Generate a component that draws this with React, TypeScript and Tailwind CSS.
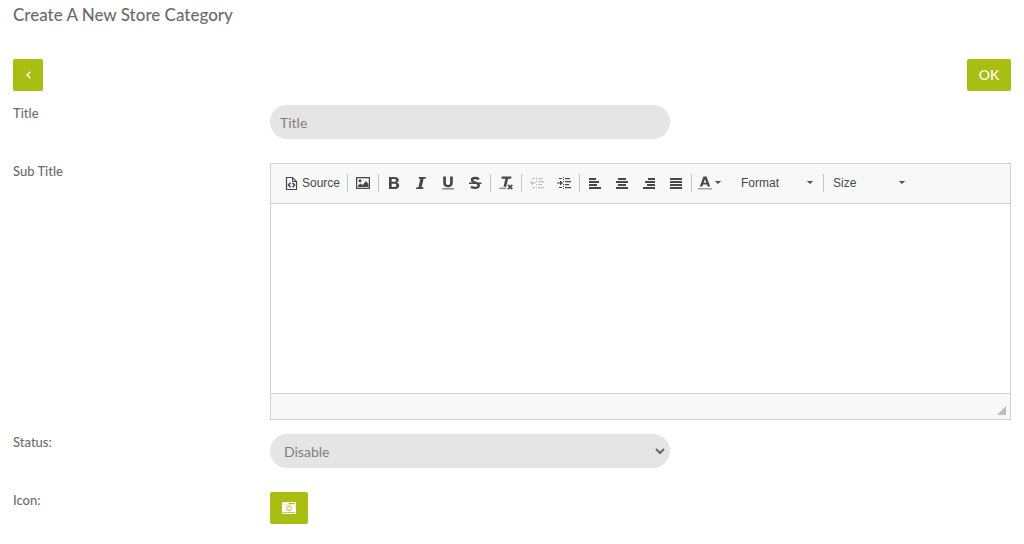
import React from 'react';

interface ToolButtonProps {
  label: string;
  disabled?: boolean;
  children: React.ReactNode;
}

const ToolButton: React.FC<ToolButtonProps> = ({ label, disabled, children }) => (
  <button
    type="button"
    title={label}
    aria-label={label}
    disabled={disabled}
    className="flex h-7 w-[27px] items-center justify-center text-[#484848] hover:bg-gray-200 disabled:opacity-30"
  >
    <svg className="h-4 w-4" viewBox="0 0 16 16" fill="currentColor" aria-hidden="true">
      {children}
    </svg>
  </button>
);

const Separator = () => <span className="ml-0.5 mr-px h-[18px] w-px bg-[#c4c4c4]" />;

const Caret = () => (
  <svg className="h-[3px] w-[6px]" viewBox="0 0 6 3" fill="#484848" aria-hidden="true">
    <path d="M0 0h6L3 3z" />
  </svg>
);

interface ComboProps {
  label: string;
}

const Combo: React.FC<ComboProps> = ({ label }) => (
  <button type="button" className="flex h-7 w-[88px] items-center justify-between px-2 text-[#484848] hover:bg-gray-200">
    {label}
    <Caret />
  </button>
);

const EditorToolbar = () => (
  <div
    role="toolbar"
    aria-label="Editor toolbar"
    className="flex h-10 flex-wrap items-center overflow-hidden border-b border-[#d1d1d1] bg-[#f8f8f8] px-3 pb-0.5 font-['Liberation_Sans',sans-serif] text-xs"
  >
    <button type="button" className="flex h-7 items-center gap-[3px] pr-[5px] text-[#484848] hover:bg-gray-200">
      <svg className="h-4 w-4" viewBox="0 0 16 16" fill="none" stroke="currentColor" aria-hidden="true">
        <path d="M3.500 14.500v-12h6l4 4v8z" strokeWidth="1.200" />
        <path d="M9.500 2.500v4h4" strokeWidth="1" />
        <path d="M7.500 7.800L5.500 10l2 2.200M9.500 7.800l2 2.200-2 2.200" strokeWidth="1.600" />
      </svg>
      <span>Source</span>
    </button>
    <Separator />
    <ToolButton label="Image">
      <path fillRule="evenodd" d="M1 2h14v12H1zM2.200 3.200v9.600h11.600V3.200z" />
      <circle cx="5" cy="5.800" r="1.500" />
      <path d="M3 12V10.500l2.500-2 2 1.500 3.500-4 2.500 3V12z" />
    </ToolButton>
    <Separator />
    <ToolButton label="Bold">
      <path
        fillRule="evenodd"
        d="M3 2h5.700c2.600 0 4 1.100 4 3.100 0 1.400-.7 2.200-2 2.600 1.600.3 2.500 1.400 2.500 2.900 0 2.200-1.600 3.400-4.300 3.400H3zM5.700 4v2.800h2.500c1.100 0 1.800-.5 1.800-1.400S9.400 4 8.300 4zM5.700 8.700V12h2.700c1.300 0 2-.6 2-1.700s-.7-1.600-2-1.600z"
      />
    </ToolButton>
    <ToolButton label="Italic">
      <path d="M6 2h7l-.4 1.800h-2l-2 8.400h2l-.4 1.800H3l.4-1.800h2l2-8.400h-1.800z" />
    </ToolButton>
    <ToolButton label="Underline">
      <path d="M3.200 1.500h2.700v6.300c0 1.500.6 2.200 2.100 2.200s2.100-.7 2.100-2.200V1.500h2.700V8c0 2.700-1.700 4.200-4.800 4.200S3.200 10.700 3.200 8z" />
      <path d="M2.300 13h11.500v1.500H2.300z" opacity=".65" />
    </ToolButton>
    <ToolButton label="Strike Through">
      <path
        d="M12 4.200C11 3.500 9.600 3 8.200 3c-2 0-3.200.8-3.200 2.100 0 3.400 6.800 1.800 6.800 5.400 0 1.600-1.400 2.400-3.600 2.400-1.600 0-3.100-.4-4.200-1.200"
        fill="none"
        stroke="currentColor"
        strokeWidth="2.400"
      />
      <path d="M2 7.500h12.500V9H2z" />
    </ToolButton>
    <Separator />
    <ToolButton label="Remove Format">
      <path d="M3.800 1.500h9.700L13 3.700h-2.900L8.200 11.800H5.500l1.900-8.100H3.300z" />
      <path d="M1.500 12.700h7V14h-7z" opacity=".65" />
      <path d="M10 9.800l4.300 4.400M14.300 9.800L10 14.200" stroke="currentColor" strokeWidth="1.700" />
    </ToolButton>
    <Separator />
    <ToolButton label="Decrease Indent" disabled>
      <path d="M1 8l3-2.500v2h3v1H4v2zM7 2h1v1H7zM7 4h1v1H7zM7 6h1v1H7zM7 9h1v1H7zM7 11h1v1H7zM7 13h1v1H7z" />
      <path d="M3 3h3v1H3zM3 12h3v1H3zM9 3h5v1.300H9zM9 6h6v1.300H9zM9 9h4v1.300H9zM9 12h6v1.300H9z" />
    </ToolButton>
    <ToolButton label="Increase Indent">
      <path d="M7 8L4 5.500v2H1v1h3v2zM7 2h1v1H7zM7 4h1v1H7zM7 6h1v1H7zM7 9h1v1H7zM7 11h1v1H7zM7 13h1v1H7z" />
      <path d="M3 3h3v1H3zM3 12h3v1H3zM9 3h5v1.300H9zM9 6h6v1.300H9zM9 9h4v1.300H9zM9 12h6v1.300H9z" />
    </ToolButton>
    <Separator />
    <ToolButton label="Align Left">
      <path d="M2 3h7v2H2zM2 6h10v2H2zM2 9h8v2H2zM2 12h12v2H2z" />
    </ToolButton>
    <ToolButton label="Center">
      <path d="M4 3h8v2H4zM2 6h12v2H2zM4 9h8v2H4zM2 12h12v2H2z" />
    </ToolButton>
    <ToolButton label="Align Right">
      <path d="M7 3h7v2H7zM4 6h10v2H4zM6 9h8v2H6zM2 12h12v2H2z" />
    </ToolButton>
    <ToolButton label="Justify">
      <path d="M2 3h12v2H2zM2 6h12v2H2zM2 9h12v2H2zM2 12h12v2H2z" />
    </ToolButton>
    <Separator />
    <button
      type="button"
      title="Text Color"
      aria-label="Text Color"
      className="mr-2 flex h-7 items-center gap-0.5 px-1 text-[#484848] hover:bg-gray-200"
    >
      <svg className="h-4 w-4" viewBox="0 0 16 16" fill="currentColor" aria-hidden="true">
        <path fillRule="evenodd" d="M6.500 1.500h3L13.200 11.500h-2.500l-.7-2H6l-.7 2H2.800zM8 4L6.700 7.700h2.600z" />
        <path d="M1 13h14v1.500H1z" opacity=".5" />
      </svg>
      <Caret />
    </button>
    <Combo label="Format" />
    <Separator />
    <Combo label="Size" />
  </div>
);

const RichTextEditor = () => (
  <div className="border border-[#d1d1d1]">
    <EditorToolbar />
    <textarea
      id="subtitle"
      className="block h-[189px] w-full resize-none bg-white p-5 text-sm outline-none"
    />
    <div className="flex h-[26px] items-end justify-end border-t border-[#d1d1d1] bg-[#f8f8f8] p-1">
      <svg className="h-[9px] w-[9px]" viewBox="0 0 9 9" fill="#bcbcbc" aria-hidden="true">
        <path d="M9 0v9H0z" />
      </svg>
    </div>
  </div>
);

interface FieldProps {
  label: string;
  htmlFor: string;
  children: React.ReactNode;
}

const Field: React.FC<FieldProps> = ({ label, htmlFor, children }) => (
  <div className="grid grid-cols-4 gap-x-[30px]">
    <label htmlFor={htmlFor} className="text-[13px] leading-4 font-medium">
      {label}
    </label>
    <div className="col-span-3">{children}</div>
  </div>
);

const App = () => {
  return (
    <main className="bg-white px-[13px] pt-[3px] pb-5 font-['Lato',sans-serif] text-[#6c6c6c]">
      <h1 className="text-[17px] leading-6 font-medium">Create A New Store Category</h1>

      <div className="mt-8 flex items-center justify-between">
        <button
          type="button"
          aria-label="Back"
          className="flex h-8 w-[30px] items-center justify-center rounded-xs bg-[#a8bf12] text-white"
        >
          <svg className="h-2 w-[5px]" viewBox="0 0 5 8" fill="none" stroke="currentColor" strokeWidth="1.500" aria-hidden="true">
            <path d="M4.300.7L1 4l3.300 3.300" />
          </svg>
        </button>
        <button type="submit" form="category-form" className="h-8 w-11 rounded-xs bg-[#a8bf12] text-sm font-medium text-white">
          OK
        </button>
      </div>

      <form id="category-form" className="mt-3.5 flex flex-col">
        <Field label="Title" htmlFor="title">
          <input
            id="title"
            type="text"
            placeholder="Title"
            className="block h-[34px] w-[54%] rounded-full bg-[#e5e5e5] px-2.5 text-sm outline-none placeholder:text-[#808080]"
          />
        </Field>
        <div className="mt-6">
          <Field label="Sub Title" htmlFor="subtitle">
            <RichTextEditor />
          </Field>
        </div>
        <div className="mt-3.5">
          <Field label="Status:" htmlFor="status">
            <div className="relative w-[54%]">
              <select
                id="status"
                defaultValue="disable"
                className="block h-[34px] w-full appearance-none rounded-full bg-[#e5e5e5] px-3.5 pt-0.5 text-sm text-[#808080] outline-none"
              >
                <option value="disable">Disable</option>
                <option value="enable">Enable</option>
              </select>
              <svg
                className="pointer-events-none absolute top-3.5 right-[5px] h-[7px] w-2.5"
                viewBox="0 0 10 7"
                fill="none"
                stroke="#666"
                strokeWidth="2"
                aria-hidden="true"
              >
                <path d="M1 1l4 4 4-4" />
              </svg>
            </div>
          </Field>
        </div>
        <div className="mt-6">
          <Field label="Icon:" htmlFor="icon">
            <button
              id="icon"
              type="button"
              className="flex h-8 w-[38px] items-center justify-center rounded-xs bg-[#a8bf12]"
            >
              <svg className="h-3 w-3.5" viewBox="0 0 14 12" aria-hidden="true">
                <rect width="14" height="12" rx="1" fill="#fff" />
                <path d="M1 2h5l1-1h5.500v1.200H1zM1 10h12v.8H1z" fill="#a8bf12" />
                <circle cx="7" cy="6.300" r="2.400" fill="none" stroke="#a8bf12" strokeWidth=".9" />
                <path d="M6 6.500a1 1 0 0 1 1-1" fill="none" stroke="#a8bf12" strokeWidth=".6" />
              </svg>
            </button>
          </Field>
        </div>
      </form>
    </main>
  );
};

export default App;
